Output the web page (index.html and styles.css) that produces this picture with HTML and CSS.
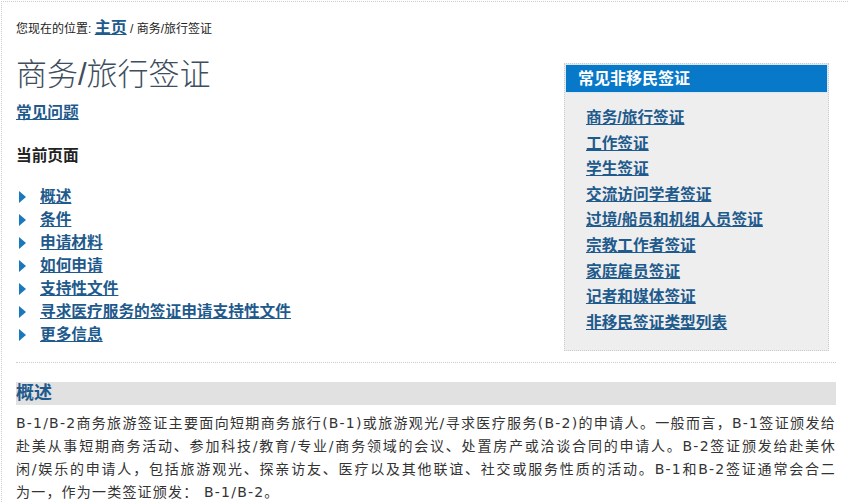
FILE: index.html
```
<!DOCTYPE html>
<html lang="zh-CN">
<head>
<meta charset="UTF-8">
<title>商务/旅行签证</title>
<link rel="stylesheet" href="styles.css">
</head>
<body>
<div id="page">
	<p class="crumb">您现在的位置: <a href="#" class="home">主页</a> / 商务/旅行签证</p>
	<div class="top">
		<div class="main">
			<h1>商务/旅行签证</h1>
			<p class="faq"><a href="#">常见问题</a></p>
			<h3>当前页面</h3>
			<ul class="toc">
				<li><a href="#">概述</a></li>
				<li><a href="#">条件</a></li>
				<li><a href="#">申请材料</a></li>
				<li><a href="#">如何申请</a></li>
				<li><a href="#">支持性文件</a></li>
				<li><a href="#">寻求医疗服务的签证申请支持性文件</a></li>
				<li><a href="#">更多信息</a></li>
			</ul>
		</div>
		<div class="side">
			<h4>常见非移民签证</h4>
			<ul>
				<li><a href="#">商务/旅行签证</a></li>
				<li><a href="#">工作签证</a></li>
				<li><a href="#">学生签证</a></li>
				<li><a href="#">交流访问学者签证</a></li>
				<li><a href="#">过境/船员和机组人员签证</a></li>
				<li><a href="#">宗教工作者签证</a></li>
				<li><a href="#">家庭雇员签证</a></li>
				<li><a href="#">记者和媒体签证</a></li>
				<li><a href="#">非移民签证类型列表</a></li>
			</ul>
		</div>
	</div>
	<div class="line"></div>
	<h2>概述</h2>
	<p class="txt"><span class="jst">B-1/B-2商务旅游签证主要面向短期商务旅行(B-1)或旅游观光/寻求医疗服务(B-2)的申请人。一般而言，B-1签证颁发给<br>赴美从事短期商务活动、参加科技/教育/专业/商务领域的会议、处置房产或洽谈合同的申请人。B-2签证颁发给赴美休<br>闲/娱乐的申请人，包括旅游观光、探亲访友、医疗以及其他联谊、社交或服务性质的活动。B-1和B-2签证通常会合二</span>为一，作为一类签证颁发： B-1/B-2。</p>
</div>
</body>
</html>
```
FILE: styles.css
```
*{ margin:0; padding:0; list-style:none}
body{
	font-family:"Liberation Sans","Noto Sans CJK SC",sans-serif;
	color:#333;
	background:#fff;
}
a{ color:#1e5a8c;}
#page{
	border-top:1px dotted #ccc;
	border-left:1px dotted #ccc;
	margin:1px 0 0 1px;
	padding:16px 12px 0 14px;
	height:500px;
	overflow:hidden;
}
.crumb{
	font-size:12px;
	line-height:20px;
	color:#222;
}
.crumb .home{
	font-size:16px;
	font-weight:bold;
}
.top{
	display:flex;
	justify-content:space-between;
}
.main h1{
	margin-top:16px;
	font-size:31px;
	font-weight:300;
	line-height:40px;
	color:#3e4e5e;
}
.faq{
	margin-top:7px;
	font-size:15.7px;
	font-weight:bold;
	line-height:22px;
}
.main h3{
	margin-top:21px;
	font-size:15.7px;
	line-height:22px;
	color:#222;
}
.toc{
	margin-top:18px;
}
.toc li{
	position:relative;
	padding-left:24px;
	font-size:15.7px;
	font-weight:bold;
	line-height:23px;
}
.toc li:before{
	content:"";
	position:absolute;
	left:3px;
	top:6px;
	border-left:7px solid #1a78bd;
	border-top:6px solid transparent;
	border-bottom:6px solid transparent;
}
.side{
	margin:24px 7px 0 0;
	width:263px;
	border:1px dotted #ccc;
	background:#eeeeee;
	padding-bottom:15px;
}
.side h4{
	background:#0878c8;
	color:#fff;
	font-size:16px;
	line-height:27px;
	padding-left:12px;
	border:1px solid #dbe9f4;
}
.side ul{
	padding:12px 0 0 21px;
}
.side li{
	font-size:15.7px;
	font-weight:bold;
	line-height:25.6px;
}
.line{
	margin-top:11px;
	border-top:1px dotted #ccc;
}
h2{
	margin-top:19px;
	background:#e1e1e1;
	font-size:18px;
	line-height:23px;
	color:#1e5a8c;
}
.txt{
	margin-top:7px;
	font-family:"DejaVu Sans","Noto Sans CJK SC",sans-serif;
	font-size:14px;
	line-height:23px;
	letter-spacing:1.2px;
	color:#333;
}
.jst{
	display:block;
	text-align:justify;
	text-align-last:justify;
}
```
